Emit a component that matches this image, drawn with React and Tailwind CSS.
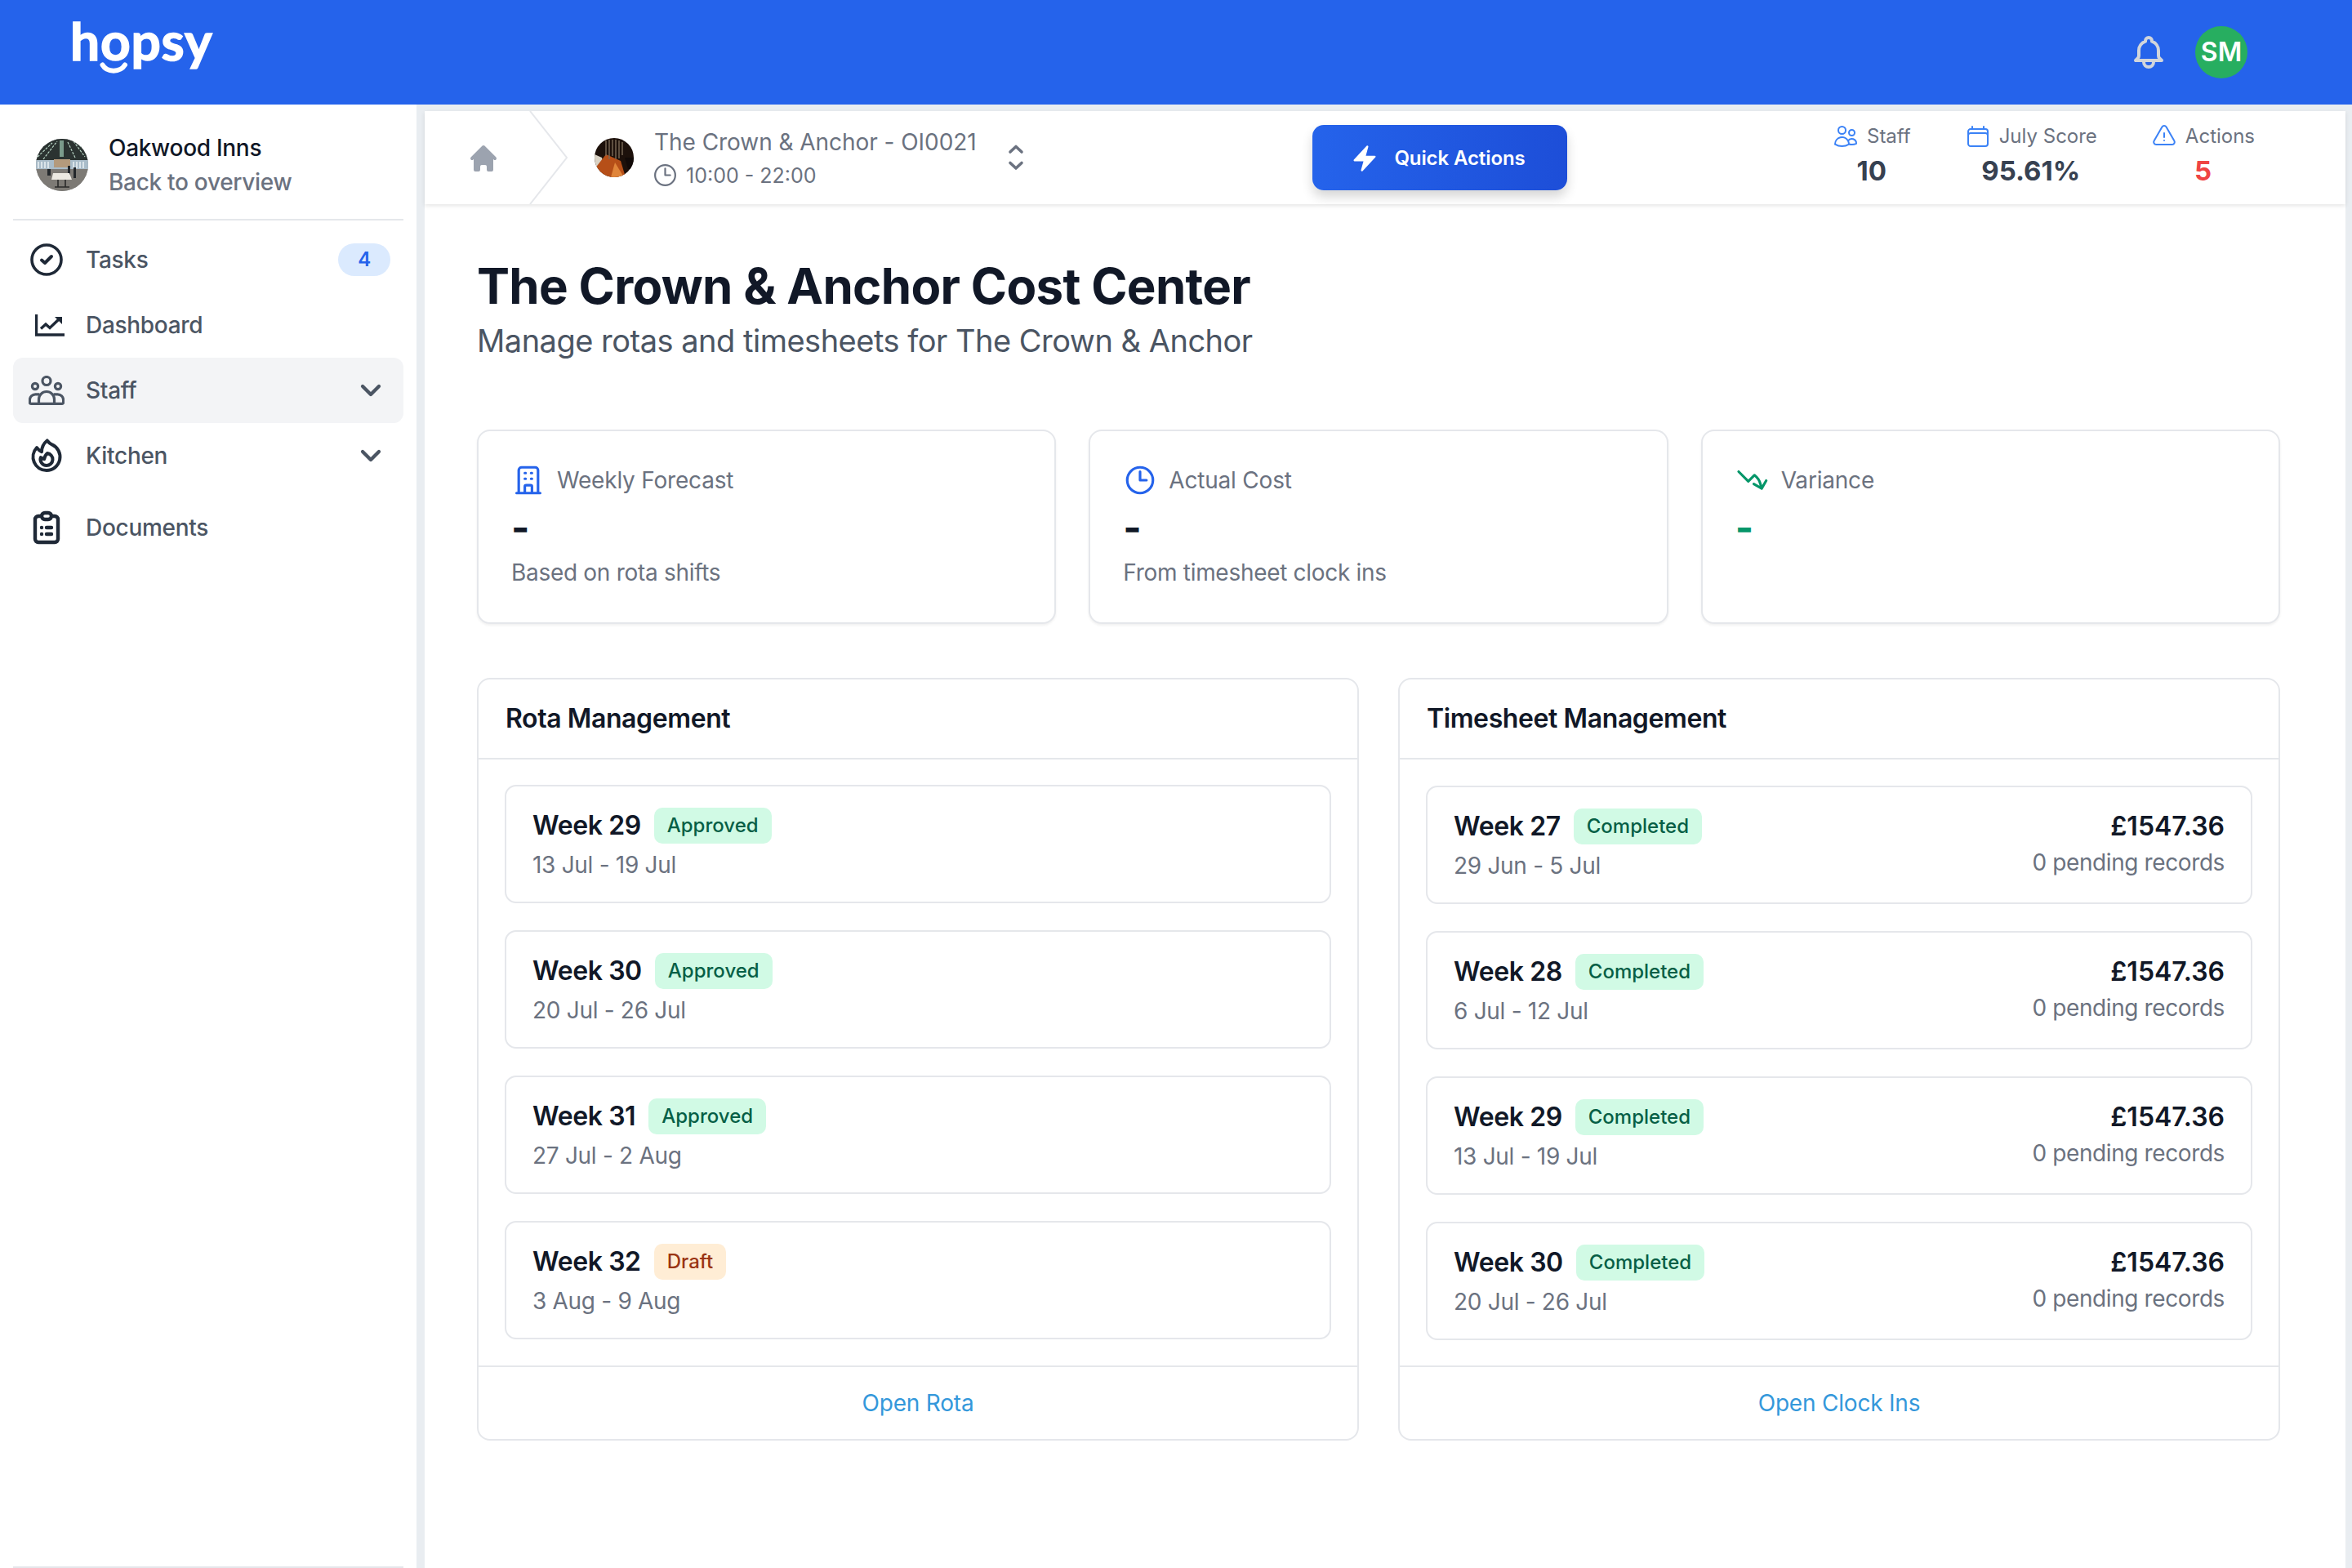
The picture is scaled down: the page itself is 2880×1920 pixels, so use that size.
import React from "react";

const O = ({ s, w = 1.5, c, d, box = 24, className = "" }) => (
  <svg width={s} height={s} viewBox={`0 0 ${box} ${box}`} fill="none" stroke={c} strokeWidth={w} strokeLinecap="round" strokeLinejoin="round" className={`shrink-0 ${className}`}>
    {d.map((p, i) => <path key={i} d={p} />)}
  </svg>
);

const CLOCK = ["M12 6v6h4.5m4.5 0a9 9 0 1 1-18 0 9 9 0 0 1 18 0Z"];
const CHEV = ["M19.5 8.25 12 15.75 4.5 8.25"];

function OakwoodAvatar() {
  return (
    <svg width="64" height="64" viewBox="0 0 64 64" className="shrink-0 rounded-full">
      <rect width="64" height="64" fill="#8b8f90" />
      <rect width="64" height="26" fill="#2b3331" />
      <path d="M2 22 20 5M9 25 26 3M46 3l14 19M39 4l9 19M62 16 50 5" stroke="#b9d6c6" strokeWidth="1.2" strokeDasharray="3 1.500" />
      <rect x="29" y="2" width="5" height="20" fill="#8fb5a2" opacity="0.8" />
      <rect x="0" y="26" width="64" height="11" fill="#a9bcc9" />
      <path d="M3 28v8M7 28v8M11 28v8M15 28v8M46 28v8M50 28v8M54 28v8M58 28v8" stroke="#e7eef2" strokeWidth="1.600" />
      <rect x="22" y="25" width="20" height="10" fill="#b49a7c" />
      <rect x="0" y="37" width="64" height="27" fill="#7d7a75" />
      <path d="M14 37h4v8h-4zM46 35h3v13h-3zM39 33h3v16h-3z" fill="#23272b" />
      <path d="M21 42h20l3 8H19z" fill="#ece9e2" />
      <path d="M27 50v9M36 50v9M23 59h18" stroke="#2a2a2a" strokeWidth="1.600" />
    </svg>
  );
}

function StoreAvatar() {
  return (
    <svg width="48" height="48" viewBox="0 0 48 48" className="shrink-0 rounded-full">
      <rect width="48" height="48" fill="#1d110b" />
      <path d="M0 20 9 24 12 36 0 38Z" fill="#d9d2c4" />
      <path d="M0 38 14 20l18 8 6 20H0Z" fill="#b64f18" />
      <path d="M20 48 25 30l11 18Z" fill="#e0853a" />
      <path d="M14 3v19M18 2v24M22 2v20M26 2v24M30 3v22M34 5v16" stroke="#7b6a58" strokeWidth="1.400" />
      <path d="M37 24h11v14H41Z" fill="#120a08" />
    </svg>
  );
}

function Logo() {
  return (
    <div className="relative ml-[86px] mt-[12px] h-[96px] w-[180px]">
      <span className="block font-['Lato',sans-serif] text-[64px] font-bold leading-[76px] tracking-[0.8px] text-white [-webkit-text-stroke:1.5px_white]">hopsy</span>
      <svg width="36" height="16" viewBox="0 0 36 16" fill="none" className="absolute left-[36px] top-[64px]">
        <path d="M3.5 3.5C9 13 25 13 31 3.5" stroke="#fff" strokeWidth="6" strokeLinecap="round" />
      </svg>
    </div>
  );
}

const Tasks = () => (
  <svg width="40" height="40" viewBox="0 0 40 40" fill="none" stroke="#1f2937" strokeLinecap="round" strokeLinejoin="round">
    <circle cx="20" cy="20" r="18" strokeWidth="3.6" />
    <path d="M14 20.5l4 3.5 8-8" strokeWidth="4" />
  </svg>
);
const Dash = () => (
  <svg width="36" height="27" viewBox="0 0 36 27" fill="none" stroke="#1f2937" className="ml-[8px] shrink-0">
    <path d="M1.5 0v25h34.5" strokeWidth="3.4" />
    <path d="M7 17.500l6-5.500 5 4.500L29 6" strokeWidth="3.4" />
    <path d="M24 3h9v9z" fill="#1f2937" stroke="none" />
  </svg>
);
const Staff = () => (
  <svg width="44" height="36" viewBox="0 0 44 36" fill="none" stroke="#4b5563" strokeWidth="3.2" strokeLinejoin="round">
    <circle cx="22" cy="6.500" r="5" />
    <circle cx="8" cy="13" r="3.600" />
    <circle cx="36" cy="13" r="3.600" />
    <path d="M12.500 34.400V29a9.500 9.500 0 0 1 19 0v5.400z" />
    <path d="M12.500 34.400H3a1.600 1.600 0 0 1-1.600-1.600v-3a7 7 0 0 1 7-7h5M31.500 34.400H41a1.600 1.600 0 0 0 1.600-1.600v-3a7 7 0 0 0-7-7h-5" />
  </svg>
);

const nav = [
  { label: "Tasks", icon: <Tasks />, badge: "4" },
  { label: "Dashboard", icon: <Dash /> },
  { label: "Staff", icon: <Staff />, chevron: true, active: true },
  {
    label: "Kitchen", chevron: true,
    icon: <O s={48} w={2} c="#1f2937" d={["M15.362 5.214A8.252 8.252 0 0 1 12 21 8.25 8.25 0 0 1 6.038 7.047 8.287 8.287 0 0 0 9 9.601a8.983 8.983 0 0 1 3.361-6.867 8.21 8.21 0 0 0 3 2.48Z", "M12 18a3.75 3.75 0 0 0 .495-7.468 5.99 5.99 0 0 0-1.925 3.547 5.975 5.975 0 0 1-2.133-1.001A3.75 3.75 0 0 0 12 18Z"]} />,
  },
  {
    label: "Documents", spaced: true,
    icon: <O s={48} w={2.2} c="#1f2937" d={["M9 5H7a2 2 0 0 0-2 2v12a2 2 0 0 0 2 2h10a2 2 0 0 0 2-2V7a2 2 0 0 0-2-2h-2M9 5a2 2 0 0 0 2 2h2a2 2 0 0 0 2-2M9 5a2 2 0 0 1 2-2h2a2 2 0 0 1 2 2m-3 7h3m-3 4h3m-6-4h.01M9 16h.01"]} />,
  },
];

function Sidebar() {
  return (
    <aside className="flex w-[510px] shrink-0 flex-col bg-white">
      <div className="mx-4 flex h-[142px] items-center gap-[25px] border-b-2 border-[#e5e7eb] pl-[28px] pt-2">
        <OakwoodAvatar />
        <div className="flex flex-col text-[28px] font-medium leading-[42px] tracking-[-0.3px]">
          <span className="text-[#111827]">Oakwood Inns</span>
          <span className="text-[#6b7280]">Back to overview</span>
        </div>
      </div>
      <nav className="mx-4 mt-2 flex flex-col">
        {nav.map((n) => (
          <div key={n.label} className={`flex h-20 items-center rounded-xl text-[28px] font-medium tracking-[-0.3px] text-[#4b5563] ${n.active ? "bg-[#f3f4f6]" : ""} ${n.spaced ? "mt-2" : ""}`}>
            <span className="flex w-[89px] shrink-0 items-center justify-center pl-[1px] pr-[8px]">{n.icon}</span>
            <span className="flex-1">{n.label}</span>
            {n.badge && <span className="mr-4 flex h-10 w-16 items-center justify-center rounded-full bg-[#dbeafe] text-[24px] font-semibold text-[#2563eb]">{n.badge}</span>}
            {n.chevron && <O s={32} w={3.2} c="#4b5563" d={CHEV} className="mr-6" />}
          </div>
        ))}
      </nav>
      <div className="mx-4 mt-auto border-t-2 border-[#e5e7eb]" />
    </aside>
  );
}

const stats = [
  { label: "Staff", value: "10", color: "text-[#374151]", icon: ["M15 19.128a9.38 9.38 0 0 0 2.625.372 9.337 9.337 0 0 0 4.121-.952 4.125 4.125 0 0 0-7.533-2.493M15 19.128v-.003c0-1.113-.285-2.16-.786-3.07M15 19.128v.106A12.318 12.318 0 0 1 8.624 21c-2.331 0-4.512-.645-6.374-1.766l-.001-.109a6.375 6.375 0 0 1 11.964-3.07M12 6.375a3.375 3.375 0 1 1-6.75 0 3.375 3.375 0 0 1 6.75 0Zm8.25 2.25a2.625 2.625 0 1 1-5.25 0 2.625 2.625 0 0 1 5.25 0Z"] },
  { label: "July Score", value: "95.61%", color: "text-[#374151]", icon: ["M6.75 3v2.25M17.25 3v2.25M3 18.75V7.5a2.25 2.25 0 0 1 2.25-2.25h13.5A2.25 2.25 0 0 1 21 7.5v11.25m-18 0A2.25 2.25 0 0 0 5.25 21h13.5A2.25 2.25 0 0 0 21 18.75m-18 0v-7.5A2.25 2.25 0 0 1 5.25 9h13.5A2.25 2.25 0 0 1 21 11.25v7.5"] },
  { label: "Actions", value: "5", color: "text-[#ef4444]", icon: ["M12 9v3.75m-9.303 3.376c-.866 1.5.217 3.374 1.948 3.374h14.71c1.73 0 2.813-1.874 1.948-3.374L13.949 3.378c-.866-1.5-3.032-1.5-3.898 0L2.697 16.126ZM12 15.75h.007v.008H12v-.008Z"] },
];

function TopBar() {
  return (
    <div className="relative flex h-[114px] shrink-0 items-center bg-white shadow-[0_2px_5px_rgba(0,0,0,0.1)]">
      <div className="flex w-[129px] shrink-0 items-center justify-center pl-[15px] pt-[2px]">
        <svg width="40" height="40" viewBox="0 0 20 20" fill="#9ca3af">
          <path d="M10.707 2.293a1 1 0 0 0-1.414 0l-7 7a1 1 0 0 0 1.414 1.414L4 10.414V17a1 1 0 0 0 1 1h2a1 1 0 0 0 1-1v-2a1 1 0 0 1 1-1h2a1 1 0 0 1 1 1v2a1 1 0 0 0 1 1h2a1 1 0 0 0 1-1v-6.586l.293.293a1 1 0 0 0 1.414-1.414l-7-7z" />
        </svg>
      </div>
      <svg width="48" height="114" viewBox="0 0 48 114" fill="none" stroke="#e5e7eb" strokeWidth="2" className="absolute left-[128px] top-0">
        <path d="M1 0l45 57-45 57" />
      </svg>
      <div className="ml-[79px] shrink-0"><StoreAvatar /></div>
      <div className="ml-[25px] flex w-[433px] shrink-0 flex-col text-[#6b7280]">
        <span className="text-[28px] leading-[40px] tracking-[-0.05px]">The Crown &amp; Anchor - OI0021</span>
        <span className="mt-[3px] flex items-center gap-[9px] text-[25px] leading-[36px]">
          <O s={33} w={1.6} c="#6b7280" d={CLOCK} className="-ml-[3px]" />10:00 - 22:00
        </span>
      </div>
      <svg width="20" height="32" viewBox="0 0 20 32" fill="none" stroke="#6b7280" strokeWidth="3.6" strokeLinecap="round" strokeLinejoin="round" className="shrink-0">
        <path d="M3 9l7-6.500 7 6.500M3 22.500l7 6.500 7-6.500" />
      </svg>
      <button className="ml-[353px] flex h-20 w-[312px] shrink-0 items-center justify-center gap-[18px] rounded-[14px] bg-gradient-to-r from-[#2563eb] to-[#1d4ed8] pr-[5px] pt-[1px] text-[24px] font-semibold tracking-[-0.1px] text-white shadow-[0_8px_14px_rgba(0,0,0,0.16)]">
        <svg width="36" height="36" viewBox="0 0 24 24" fill="#fff">
          <path d="M14.615 1.595a.75.75 0 0 1 .359.852L12.982 9.75h7.268a.75.75 0 0 1 .548 1.262l-10.5 11.25a.75.75 0 0 1-1.272-.71l1.992-7.302H3.750a.75.75 0 0 1-.548-1.262l10.5-11.25a.75.75 0 0 1 .913-.143Z" />
        </svg>
        Quick Actions
      </button>
      <div className="ml-[325px] flex shrink-0 -translate-y-[3px] gap-[66px]">
        {stats.map((s) => (
          <div key={s.label} className="flex flex-col items-center">
            <span className="flex h-[36px] items-center gap-[10px] text-[24px] text-[#6b7280]">
              <O s={32} w={1.5} c="#3b82f6" d={s.icon} />{s.label}
            </span>
            <span className={`mt-[2px] text-[33px] font-bold leading-[44px] ${s.color}`}>{s.value}</span>
          </div>
        ))}
      </div>
    </div>
  );
}

const summary = [
  { label: "Weekly Forecast", sub: "Based on rota shifts", value: "text-[#111827]", color: "#2563eb", icon: ["M5.25 21V5a2 2 0 0 1 2-2h9.500a2 2 0 0 1 2 2v16M3.750 21h16.500M9.500 7h.6M13.900 7h.6M9.500 11h.6M13.900 11h.6M9.500 21v-4.500a1 1 0 0 1 1-1h3a1 1 0 0 1 1 1V21"] },
  { label: "Actual Cost", sub: "From timesheet clock ins", value: "text-[#111827]", color: "#2563eb", icon: CLOCK },
  { label: "Variance", sub: "", value: "text-[#059669]", color: "#059669", icon: ["M2.25 6 9 12.75l4.286-4.286a11.948 11.948 0 0 1 4.306 6.43l.776 2.898m0 0 3.182-5.511m-3.182 5.51-5.511-3.181"] },
];

function SummaryCard({ c }) {
  return (
    <div className="rounded-2xl border-2 border-[#e5e7eb] bg-white px-10 pt-10 shadow-[0_2px_3px_rgba(0,0,0,0.06)]">
      <div className="flex h-10 items-center gap-[14px] text-[28px] tracking-[-0.2px] text-[#6b7280]">
        <O s={42} w={1.8} c={c.color} d={c.icon} />{c.label}
      </div>
      <div className={`mt-[6px] text-[48px] font-bold leading-[64px] ${c.value}`}>-</div>
      <div className="mt-[3px] h-[81px] text-[28px] leading-[40px] tracking-[-0.3px] text-[#6b7280]">{c.sub}</div>
    </div>
  );
}

const Badge = ({ text }) => {
  const draft = text === "Draft";
  return (
    <span className={`flex h-11 items-center rounded-[10px] px-4 text-[24px] font-medium ${draft ? "bg-[#ffedd5] text-[#9a3412]" : "bg-[#d1fae5] text-[#065f46]"}`}>{text}</span>
  );
};

function Row({ week, status, dates, right }) {
  return (
    <div className="flex h-[145px] items-center justify-between rounded-[14px] border-2 border-[#e5e7eb] bg-white px-8">
      <div className="flex flex-col">
        <div className="flex items-center gap-4">
          <span className="text-[32px] font-semibold leading-[44px] tracking-[-0.4px] text-[#111827]">{week}</span>
          <Badge text={status} />
        </div>
        <span className="mt-[6px] text-[28px] leading-[40px] tracking-[-0.3px] text-[#6b7280]">{dates}</span>
      </div>
      {right && (
        <div className="flex flex-col items-end pb-[5px]">
          <span className="text-[32px] font-semibold leading-[48px] text-[#111827]">£1547.36</span>
          <span className="text-[28px] leading-[40px] tracking-[-0.4px] text-[#6b7280]">0 pending records</span>
        </div>
      )}
    </div>
  );
}

function Panel({ title, link, rows, right, className }) {
  return (
    <section className="flex h-[934px] flex-col rounded-2xl border-2 border-[#e5e7eb] bg-white">
      <h2 className="flex h-[96px] items-center pl-[33px] text-[32px] font-semibold tracking-[-0.4px] text-[#111827]">{title}</h2>
      <div className={`flex flex-1 flex-col gap-[33px] border-y-2 border-[#e5e7eb] px-8 ${className}`}>
        {rows.map((r) => <Row key={r.week} {...r} right={right} />)}
      </div>
      <div className="flex h-[88px] items-center justify-center text-[28px] tracking-[-0.2px] text-[#3498db]">{link}</div>
    </section>
  );
}

const rota = [
  { week: "Week 29", status: "Approved", dates: "13 Jul - 19 Jul" },
  { week: "Week 30", status: "Approved", dates: "20 Jul - 26 Jul" },
  { week: "Week 31", status: "Approved", dates: "27 Jul - 2 Aug" },
  { week: "Week 32", status: "Draft", dates: "3 Aug - 9 Aug" },
];
const sheets = [
  { week: "Week 27", status: "Completed", dates: "29 Jun - 5 Jul" },
  { week: "Week 28", status: "Completed", dates: "6 Jul - 12 Jul" },
  { week: "Week 29", status: "Completed", dates: "13 Jul - 19 Jul" },
  { week: "Week 30", status: "Completed", dates: "20 Jul - 26 Jul" },
];

export default function App() {
  return (
    <div className="flex h-[1920px] w-[2880px] flex-col overflow-hidden bg-white font-['Inter',sans-serif]">
      <header className="flex h-[128px] shrink-0 items-start bg-[#2563eb]">
        <Logo />
        <div className="ml-auto mr-[128px] mt-[32px] flex items-center gap-[33px]">
          <O s={48} w={2} c="#d1d5db" d={["M15 17h5l-1.405-1.405A2.032 2.032 0 0 1 18 14.158V11a6.002 6.002 0 0 0-4-5.659V5a2 2 0 1 0-4 0v.341C7.67 6.165 6 8.388 6 11v3.159c0 .538-.214 1.055-.595 1.436L4 17h5m6 0v1a3 3 0 1 1-6 0v-1m6 0H9"]} />
          <div className="flex h-16 w-16 items-center justify-center rounded-full bg-[#27ae60] text-[32px] font-semibold text-white">SM</div>
        </div>
      </header>
      <div className="flex min-h-0 flex-1">
        <Sidebar />
        <main className="flex min-w-0 flex-1 flex-col bg-[#e9edf1] pl-[10px] pr-2 pt-2">
          <TopBar />
          <div className="flex-1 bg-white pl-16 pr-20">
            <h1 className="mt-[64px] text-[60px] font-bold leading-[72px] tracking-[-0.7px] text-[#111827]">The Crown &amp; Anchor Cost Center</h1>
            <p className="mt-[3px] text-[38px] leading-[56px] tracking-[-0.5px] text-[#4b5563]">Manage rotas and timesheets for The Crown &amp; Anchor</p>
            <div className="mt-[81px] grid grid-cols-3 gap-10">
              {summary.map((c) => <SummaryCard key={c.label} c={c} />)}
            </div>
            <div className="mt-[66px] grid grid-cols-2 gap-12">
              <Panel title="Rota Management" link="Open Rota" rows={rota} className="pt-[31px]" />
              <Panel title="Timesheet Management" link="Open Clock Ins" rows={sheets} right className="pt-[32px]" />
            </div>
          </div>
        </main>
      </div>
    </div>
  );
}
